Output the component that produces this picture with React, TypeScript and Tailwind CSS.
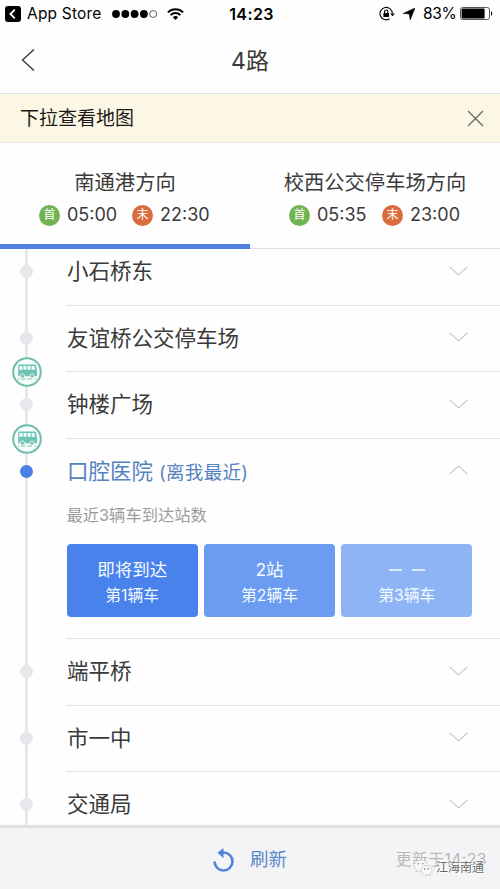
interface Stop {
  name: string;
  bus?: boolean;
  nearest?: boolean;
}

interface Direction {
  title: string;
  first: string;
  last: string;
}

const DIRECTIONS: Direction[] = [
  { title: '南通港方向', first: '05:00', last: '22:30' },
  { title: '校西公交停车场方向', first: '05:35', last: '23:00' },
];

// bus: a vehicle is between this stop and the next one
const STOPS: Stop[] = [
  { name: '小石桥东' },
  { name: '友谊桥公交停车场', bus: true },
  { name: '钟楼广场', bus: true },
  { name: '口腔医院', nearest: true },
  { name: '端平桥' },
  { name: '市一中' },
  { name: '交通局' },
];

const ARRIVALS = [
  { eta: '即将到达', label: '第1辆车', color: 'bg-[#4a82ec]' },
  { eta: '2站', label: '第2辆车', color: 'bg-[#6c9cf1]' },
  { eta: '', label: '第3辆车', color: 'bg-[#8eb4f6]' },
];

export default function App() {
  return (
    <div className="w-[500px] h-[889px] flex flex-col overflow-hidden bg-[#fefefe] text-[#3a3a3a] font-['Inter','Noto_Sans_CJK_SC',sans-serif] whitespace-nowrap">
      <StatusBar />
      <header className="h-[67px] shrink-0 grid grid-cols-[1fr_auto_1fr] items-center border-b border-[#dededb]">
        <BackIcon />
        <h1 className="text-[23px] leading-none pt-0.5">4路</h1>
      </header>
      <div className="h-[49px] shrink-0 flex items-center justify-between pl-5 pr-4 bg-[#fcf6e4] border-b border-[#e9e7e4]">
        <span className="text-[19px] leading-none text-[#181818] pt-px">下拉查看地图</span>
        <CloseIcon />
      </div>
      <div className="h-[106px] shrink-0 grid grid-cols-2">
        {DIRECTIONS.map((d, i) => (
          <DirectionTab key={d.title} direction={d} active={i === 0} />
        ))}
      </div>
      <main className="flex-1 min-h-0 overflow-hidden">
        <div className="-mt-[10px]">
          {STOPS.map(s => <StopRow key={s.name} stop={s} />)}
        </div>
      </main>
      <Footer />
    </div>
  );
}

function StatusBar() {
  return (
    <div className="h-[27px] shrink-0 grid grid-cols-[1fr_auto_1fr] items-center px-[5px] text-black text-[15.5px] leading-none">
      <div className="flex items-center">
        <svg className="w-4 h-4" viewBox="0 0 16 16">
          <rect width="16" height="16" rx="3" fill="#000" />
          <path d="M9.8 3.7L5.4 8l4.4 4.3" fill="none" stroke="#fff" strokeWidth="1.8" />
        </svg>
        <span className="ml-1.5 w-[75px] tracking-[0.2px]">App Store</span>
        <svg className="ml-2.5 w-[46px] h-2" viewBox="0 0 46 8">
          <circle cx="4" cy="4" r="3.9" />
          <circle cx="13.3" cy="4" r="3.9" />
          <circle cx="22.6" cy="4" r="3.9" />
          <circle cx="31.9" cy="4" r="3.9" />
          <circle cx="41.2" cy="4" r="3.5" fill="none" stroke="#333" strokeWidth=".8" />
        </svg>
        <svg className="ml-[9px] w-[17px] h-3" viewBox="0 0 17 12" fill="none" stroke="#000" strokeWidth="2">
          <path d="M.9 4.4a10.8 10.8 0 0115.2 0" />
          <path d="M3.6 7.1a7 7 0 019.8 0" />
          <path d="M8.5 12L5.8 9.3a3.8 3.8 0 015.4 0z" fill="#000" stroke="none" />
        </svg>
      </div>
      <span className="font-semibold text-[16px] tracking-[0.4px] pl-[3px]">14:23</span>
      <div className="flex items-center justify-end">
        <svg className="w-4 h-4" viewBox="0 0 16 16" fill="none" stroke="#000" strokeWidth="1.1">
          <path d="M13.4 7.6A6.2 6.2 0 1010.6 12.8" />
          <path d="M11.2 7.4h4.6l-2.3 2.8z" fill="#000" stroke="none" />
          <rect x="4.4" y="6.9" width="5.6" height="4.2" rx=".4" fill="#000" stroke="none" />
          <path d="M5.6 7V5.6a1.6 1.6 0 013.2 0V7" />
        </svg>
        <svg className="ml-2 w-3 h-3" viewBox="0 0 12 12">
          <path d="M12 0L7.2 12 6.2 5.9 0 5.5z" stroke="#000" strokeWidth=".5" />
        </svg>
        <span className="ml-2 w-[33px] tracking-[-0.3px]">83%</span>
        <svg className="ml-1 mr-[2px] w-[33px] h-[13px]" viewBox="0 0 33 13">
          <rect x=".5" y=".5" width="29" height="12" rx="2.2" fill="#fff" stroke="#555" />
          <rect x="1.6" y="1.6" width="23" height="9.8" rx="1" />
          <path d="M31 4.2c1.7.6 1.7 4 0 4.6z" />
        </svg>
      </div>
    </div>
  );
}

function DirectionTab({ direction, active }: { direction: Direction; active: boolean }) {
  return (
    <div className={`flex flex-col items-center pt-7 border-b ${active ? 'border-b-[5px] border-[#5080df]' : 'border-[#dcdfe2]'}`}>
      <div className="text-[20.3px] leading-6">{direction.title}</div>
      <div className="mt-2 flex items-center text-[18px] leading-6">
        <span className="size-[21px] rounded-full bg-[#72b352] text-white text-[12px] leading-[20px] text-center">首</span>
        <span className="ml-[7px] w-[51px]">{direction.first}</span>
        <span className="ml-[14px] size-[21px] rounded-full bg-[#d96c3d] text-white text-[12px] leading-[20px] text-center">末</span>
        <span className="ml-[7px] w-[51px]">{direction.last}</span>
      </div>
    </div>
  );
}

function StopRow({ stop }: { stop: Stop }) {
  return (
    <div className="flex">
      <div className="relative w-[66px] shrink-0">
        <div className="ml-[25px] w-[3px] h-full bg-[#e8e8eb]" />
        <span className={`absolute left-5 top-[26px] size-[13px] rounded-full ${stop.nearest ? 'bg-[#4b7fe8]' : 'bg-[#e6e7ea]'}`} />
        {stop.bus && <BusIcon />}
      </div>
      <div className="flex-1 border-b border-[#e0e0e2]">
        <div className="h-[65.67px] flex items-center justify-between pr-8 pl-px">
          <div className={`text-[21.5px] leading-none ${stop.nearest ? 'text-[#5583bf]' : ''}`}>
            {stop.name}
            {stop.nearest && <span className="ml-1.5 text-[18.5px] tracking-[0.3px]">(离我最近)</span>}
          </div>
          <ChevronIcon up={stop.nearest} />
        </div>
        {stop.nearest && (
          <div className="h-[133.33px] pl-[0.5px]">
            <div className="text-[16.3px] leading-5 text-[#9c9c9e]">最近3辆车到达站数</div>
            <div className="mt-[19px] grid grid-cols-3 gap-[6px] w-[406px]">
              {ARRIVALS.map(a => (
                <div key={a.label} className={`h-[73px] rounded-[4px] flex flex-col items-center pt-[13px] text-[#f4fbff] ${a.color}`}>
                  <div className="h-[26px] flex items-center text-[17.5px] leading-none">
                    {a.eta || <DashesIcon />}
                  </div>
                  <div className="text-[15.8px] leading-[25px]">{a.label}</div>
                </div>
              ))}
            </div>
          </div>
        )}
      </div>
    </div>
  );
}

function Footer() {
  return (
    <footer className="relative h-16 shrink-0 grid grid-cols-[1fr_auto_1fr] items-center bg-[#f4f4f7] border-t-[3px] border-[#e1e1e4]">
      <button type="button" className="col-start-2 flex items-center gap-4 pt-0.5 text-[#5a89c9] text-[18.5px] leading-none">
        <RefreshIcon />
        刷新
      </button>
      <span className="justify-self-end mr-[13px] pt-0.5 text-[15.8px] leading-none text-[#b8b8bb] tracking-[0.4px]">更新于14:23</span>
      <div className="absolute right-4 bottom-[11px] flex items-center gap-[3px] text-[12px] leading-[20px] text-[#666] [text-shadow:-1px_-1px_0_#fff,1px_1px_1px_#fff]">
        <WechatIcon />
        <span>江海南通</span>
      </div>
    </footer>
  );
}

function BackIcon() {
  return (
    <svg className="ml-[21px] w-[14px] h-6" viewBox="0 0 14 24" fill="none" stroke="#333" strokeWidth="1.3">
      <path d="M13 1.5L1.5 12 13 22.5" />
    </svg>
  );
}

function CloseIcon() {
  return (
    <svg className="size-[17px]" viewBox="0 0 17 17" fill="none" stroke="#666" strokeWidth="1.3">
      <path d="M1 1l15 15M16 1L1 16" />
    </svg>
  );
}

function ChevronIcon({ up }: { up?: boolean }) {
  return (
    <svg className={`w-[19px] h-[10px] ${up ? 'rotate-180 -translate-y-0.5' : '-translate-y-px'}`} viewBox="0 0 19 10" fill="none" stroke="#c3c3c7" strokeWidth="1.1">
      <path d="M.5 .8l9 8 9-8" />
    </svg>
  );
}

function DashesIcon() {
  return (
    <svg className="w-9 h-2" viewBox="0 0 36 8" stroke="#f4fbff" strokeWidth="1.4">
      <path d="M0 4h13M23 4h13" />
    </svg>
  );
}

function BusIcon() {
  return (
    <svg className="absolute z-10 left-[11.5px] -bottom-[15px] size-[30px]" viewBox="0 0 30 30">
      <circle cx="15" cy="15" r="13.8" fill="#f5fdfb" stroke="#70bdad" strokeWidth="2" />
      <path d="M7 7.6h15.5c1.2 0 1.6.6 1.8 1.6l.7 4.8v5.2H6.2V8.4c0-.5.3-.8.8-.8z" fill="#6ec4b4" />
      <path d="M7.4 9h3v3.8h-3zM11.5 9h3v3.8h-3zM15.6 9h3v3.8h-3zM19.7 9h2.6l.8 3.8h-3.4z" fill="#f5fdfb" />
      <circle cx="10.5" cy="19" r="2.1" fill="#6ec4b4" stroke="#f5fdfb" strokeWidth=".8" />
      <circle cx="20" cy="19" r="2.1" fill="#6ec4b4" stroke="#f5fdfb" strokeWidth=".8" />
      <path d="M6 22h1.2M9 22h4.5M15.5 22H20M22.5 22H24" stroke="#8abfb4" />
    </svg>
  );
}

function RefreshIcon() {
  return (
    <svg className="w-[21px] h-6" viewBox="0 0 21 24">
      <path d="M1.5 13.5A9 9 0 1010.5 4.5H8" fill="none" stroke="#5383dc" strokeWidth="2.6" />
      <path d="M4.5 4.8L10.5 0v10.2z" fill="#5383dc" />
    </svg>
  );
}

function WechatIcon() {
  return (
    <svg className="w-5 h-[18px]" viewBox="0 0 20 18" fill="#fafafb" stroke="#aaa" strokeWidth=".7" strokeDasharray="2 1">
      <path d="M7.5 1C3.8 1 1 3.3 1 6.4c0 1.8.9 3.3 2.4 4.3L3 13l2.3-1.2c.8.2 1.5.3 2.4.3 3.7 0 6.5-2.5 6.5-5.6S11.2 1 7.5 1z" />
      <path d="M13.5 6.5c-3.2 0-5.5 2-5.5 4.7s2.3 4.8 5.5 4.8c.7 0 1.3-.1 1.9-.3l1.8 1-.5-1.7c1.5-.9 2.3-2.2 2.3-3.8 0-2.6-2.3-4.7-5.5-4.7z" />
      <g fill="#777" stroke="none">
        <circle cx="5.3" cy="4.8" r=".8" />
        <circle cx="9.7" cy="4.8" r=".8" />
        <circle cx="11.7" cy="10" r=".8" />
        <circle cx="15.3" cy="10" r=".8" />
      </g>
    </svg>
  );
}
